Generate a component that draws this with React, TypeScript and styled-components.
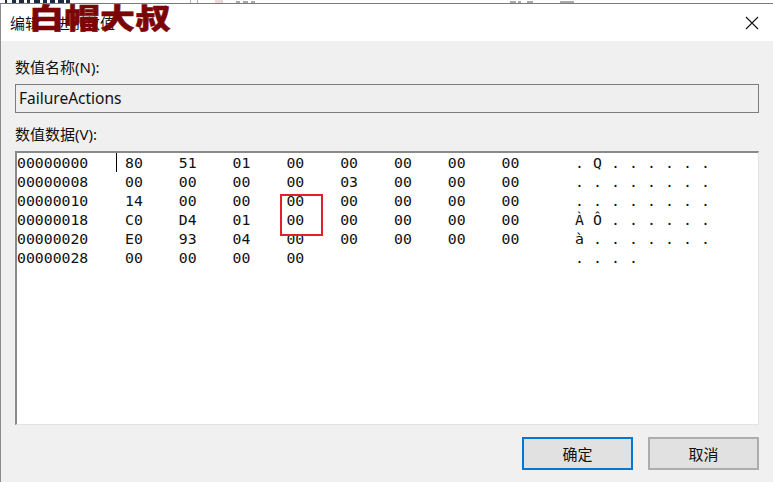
import { createGlobalStyle } from "styled-components";
import styled from "styled-components";

const Global = createGlobalStyle`
  html, body { margin: 0; padding: 0; background: #fff; }
  body { width: 773px; height: 482px; overflow: hidden; }
`;

const CJK = `"Noto Sans CJK SC", "Liberation Sans", sans-serif`;
const UI = `"Noto Sans", "Noto Sans CJK SC", sans-serif`;
const MONO = `"DejaVu Sans Mono", monospace`;

const Page = styled.div`
  position: relative;
  width: 773px;
  height: 482px;
  font-family: ${UI};
  color: #111;
`;

const BackStrip = styled.svg`
  display: block;
  width: 773px;
  height: 3px;
`;

const Window = styled.div`
  display: flex;
  flex-direction: column;
  height: 479px;
  box-sizing: border-box;
  border-top: 1px solid #7a7a7a;
  border-left: 1px solid #8c8c8c;
  background: #f0f0f0;
`;

const TitleBar = styled.div`
  display: flex;
  align-items: center;
  justify-content: space-between;
  height: 37px;
  flex: none;
  padding: 0 14px 0 9px;
  background: #fff;
  font-size: 15px;
`;

const Body = styled.div`
  display: flex;
  flex-direction: column;
  flex: 1;
  padding: 17px 14px 12px 14px;
`;

const Label = styled.div`
  height: 19px;
  line-height: 19px;
  font-size: 15px;
  margin-bottom: 7px;
`;

const NameInput = styled.div`
  height: 29px;
  line-height: 27px;
  box-sizing: border-box;
  margin-bottom: 12px;
  padding-left: 3px;
  border: 1px solid #7d7d7d;
  background: #efefef;
  font-size: 15.5px;
`;

const DataBox = styled.div`
  position: relative;
  height: 274px;
  box-sizing: border-box;
  border: 1px solid #e3e3e3;
  border-top: 2px solid #8a8a8a;
  border-left: 2px solid #8a8a8a;
  background: #fff;
  font-family: ${MONO};
  font-size: 14.8px;
`;

const Row = styled.div`
  display: grid;
  grid-template-columns: 108px repeat(8, 53.8px) 15px 144px;
  height: 19px;
  line-height: 19px;
  white-space: pre;
`;

const Ascii = styled.div`
  display: grid;
  grid-template-columns: repeat(8, 18px);
  justify-items: center;
`;

const Caret = styled.div`
  position: absolute;
  left: 99px;
  top: 0;
  width: 1px;
  height: 19px;
  background: #000;
`;

const Highlight = styled.div`
  position: absolute;
  left: 263px;
  top: 41px;
  width: 43px;
  height: 42px;
  box-sizing: border-box;
  border: 2px solid #e2202a;
`;

const Footer = styled.div`
  display: flex;
  justify-content: flex-end;
  gap: 15px;
  margin-top: 12px;
`;

const Button = styled.div<{ $primary?: boolean }>`
  width: 111px;
  height: 33px;
  box-sizing: border-box;
  line-height: 29px;
  text-align: center;
  font-size: 15px;
  font-family: ${CJK};
  background: #e1e1e1;
  border: 2px solid ${(p) => (p.$primary ? "#0078d7" : "#adadad")};
`;

const Watermark = styled.div`
  position: absolute;
  left: 29px;
  top: -3px;
  font-family: ${CJK};
  font-weight: 900;
  font-size: 35px;
  line-height: 40px;
  letter-spacing: 0.5px;
  color: #7b0505;
  -webkit-text-stroke: 0.6px #7b0505;
  transform: scaleY(0.8);
`;

const rows: { addr: string; hex: string[]; ascii: string[] }[] = [
  { addr: "00000000", hex: ["80", "51", "01", "00", "00", "00", "00", "00"], ascii: [".", "Q", ".", ".", ".", ".", ".", "."] },
  { addr: "00000008", hex: ["00", "00", "00", "00", "03", "00", "00", "00"], ascii: [".", ".", ".", ".", ".", ".", ".", "."] },
  { addr: "00000010", hex: ["14", "00", "00", "00", "00", "00", "00", "00"], ascii: [".", ".", ".", ".", ".", ".", ".", "."] },
  { addr: "00000018", hex: ["C0", "D4", "01", "00", "00", "00", "00", "00"], ascii: ["À", "Ô", ".", ".", ".", ".", ".", "."] },
  { addr: "00000020", hex: ["E0", "93", "04", "00", "00", "00", "00", "00"], ascii: ["à", ".", ".", ".", ".", ".", ".", "."] },
  { addr: "00000028", hex: ["00", "00", "00", "00"], ascii: [".", ".", ".", "."] },
];

export default function App() {
  return (
    <Page>
      <Global />
      {/* bits of the window behind the dialog that show above its top edge */}
      <BackStrip viewBox="0 0 773 3">
        <path d="M5 1.5h2M12 1.5h4M19 1.5h5M27 1.5h3M34 1.5h6M43 1.5h4M50 1.5h5M58 1.5h6M66 1.5h4" stroke="#1c2a44" strokeWidth="3" />
        <path d="M190.5 0v3M197.5 0v3M222 0v3" stroke="#b5b5b5" />
        <path d="M215 0h6v3h-6z" fill="#f0d8d8" />
        <path d="M236 2h4M243 2h5M251 2h4M510 2h6M518 2h3M527 2h6M560 2h14" stroke="#555" />
      </BackStrip>
      <Window>
        <TitleBar>
          <span>编辑二进制数值</span>
          <svg width="14" height="14" viewBox="0 0 14 14">
            <path d="M1 1 L13 13 M13 1 L1 13" stroke="#111" strokeWidth="1.1" fill="none" />
          </svg>
        </TitleBar>
        <Body>
          <Label>数值名称(N):</Label>
          <NameInput>FailureActions</NameInput>
          <Label>数值数据(V):</Label>
          <DataBox>
            {rows.map((r) => (
              <Row key={r.addr}>
                <span>{r.addr}</span>
                {Array.from({ length: 8 }, (_, i) => (
                  <span key={i}>{r.hex[i] ?? ""}</span>
                ))}
                <span />
                <Ascii>
                  {r.ascii.map((c, i) => (
                    <span key={i}>{c}</span>
                  ))}
                </Ascii>
              </Row>
            ))}
            <Caret />
            <Highlight />
          </DataBox>
          <Footer>
            <Button $primary>确定</Button>
            <Button>取消</Button>
          </Footer>
        </Body>
      </Window>
      <Watermark>白帽大叔</Watermark>
    </Page>
  );
}
